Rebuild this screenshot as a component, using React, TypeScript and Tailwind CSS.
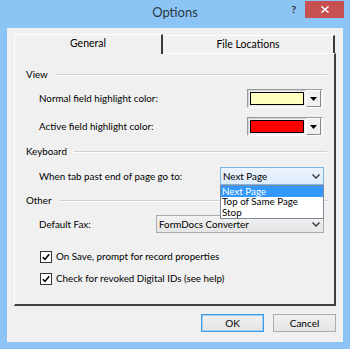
import React from "react"

function GroupHeader({ label, className }: { label: string; className: string }) {
  return (
    <div className={"h-[12px] flex items-center pl-[11px] pr-[7px] " + className}>
      <span className="leading-none">{label}</span>
      <div className="flex-1 ml-[7px] h-[2px] border-t border-t-[#d0d0d0] border-b border-b-white" />
    </div>
  )
}

function ColorPicker({ color }: { color: string }) {
  return (
    <div className="w-[76px] h-[19px] flex items-center border border-t-[#9a9a9a] border-l-[#9a9a9a] border-r-white border-b-white shadow-[inset_1px_1px_0_#d4d4d4] pl-[2px] pr-[1px] gap-[2px]">
      <div className="w-[55px] h-[13px] border border-black" style={{ backgroundColor: color }} />
      <div className="w-[15px] h-[17px] flex items-center justify-center bg-[#f0f0f0] border border-t-white border-l-white border-r-[#8a8a8a] border-b-[#8a8a8a]">
        <svg width="7" height="4" viewBox="0 0 7 4">
          <path d="M0 0h7L3.5 4z" fill="#000" />
        </svg>
      </div>
    </div>
  )
}

function Chevron() {
  return (
    <svg width="8" height="5" viewBox="0 0 8 5" className="mr-[3px]">
      <path d="M0.5 0.5L4 4L7.5 0.5" fill="none" stroke="#333" strokeWidth="1.3" />
    </svg>
  )
}

function CheckRow({ label, className }: { label: string; className: string }) {
  return (
    <div className={"h-[12px] flex items-center pl-[25px] " + className}>
      <div className="w-[12px] h-[12px] bg-white border border-[#333] flex items-center justify-center">
        <svg width="8" height="8" viewBox="0 0 8 8">
          <path d="M0.8 4.2L3 6.4L7.2 1.2" fill="none" stroke="#000" strokeWidth="1.6" />
        </svg>
      </div>
      <span className="ml-[4px] leading-none">{label}</span>
    </div>
  )
}

export default function App() {
  return (
    <div className="w-[350px] h-[349px] bg-[#8cc4f5] flex flex-col font-[Lato,sans-serif] text-[9.8px] text-black select-none overflow-hidden">
      {/* Title bar */}
      <div className="h-[28px] shrink-0 grid grid-cols-[1fr_auto_1fr]">
        <div />
        <div className="flex items-center pb-[3px] text-[13px] text-[#2b3846]">Options</div>
        <div className="flex items-start justify-end pr-[6px] pt-[1px]">
          <span className="mt-[3px] mr-[9px] text-[10px] font-bold text-[#222] leading-none">?</span>
          <div className="w-[39px] h-[17px] bg-[#c75050] flex items-center justify-center">
            <svg width="8" height="7" viewBox="0 0 8 7">
              <path d="M0.5 0.5L7.5 6.5M7.5 0.5L0.5 6.5" stroke="#fff" strokeWidth="1.5" />
            </svg>
          </div>
        </div>
      </div>

      {/* Client area */}
      <div className="mx-[7px] h-[314px] bg-[#f0f0f0] flex flex-col px-[7px] pt-[6px]">
        {/* Tabs */}
        <div className="h-[20px] flex items-end mb-[-1px]">
          <div className="relative z-10 w-[149px] h-[20px] bg-[#f0f0f0] border-t border-l border-white border-r-2 border-r-[#3a3a3a] flex items-center justify-center pb-[1px] text-[10.5px]">
            General
          </div>
          <div className="w-[172px] h-[18px] mb-[1px] bg-[#f0f0f0] border-t border-t-white border-r-2 border-r-[#3a3a3a] flex items-center justify-center text-[10.5px]">
            File Locations
          </div>
        </div>

        {/* Panel */}
        <div className="h-[253px] flex flex-col border-t border-l border-white border-r-2 border-b-2 border-r-[#404040] border-b-[#404040]">
          <GroupHeader label="View" className="mt-[15px]" />

          <div className="h-[19px] mt-[8px] flex items-center justify-between pl-[24px] pr-[11px]">
            <span>Normal field highlight color:</span>
            <ColorPicker color="#ffffc0" />
          </div>

          <div className="h-[19px] mt-[9px] flex items-center justify-between pl-[24px] pr-[11px]">
            <span>Active field highlight color:</span>
            <ColorPicker color="#ff0000" />
          </div>

          <GroupHeader label="Keyboard" className="mt-[10px]" />

          <div className="relative z-10 h-[18px] mt-[9px] flex items-center justify-between pl-[24px] pr-[10px]">
            <span>When tab past end of page go to:</span>
            <div className="relative w-[104px] h-[18px]">
              <div className="h-full flex items-center justify-between pl-[2px] border border-[#7eb4ea] bg-gradient-to-b from-[#ecf4fc] to-[#dcecfc]">
                <span>Next Page</span>
                <Chevron />
              </div>
              {/* open dropdown list */}
              <div className="absolute left-0 top-full w-full bg-white border border-[#7a8a99]">
                <div className="h-[10.5px] flex items-center pl-[1px] bg-[#3399ff] text-white">Next Page</div>
                <div className="h-[10.5px] flex items-center pl-[1px]">Top of Same Page</div>
                <div className="h-[10.5px] flex items-center pl-[1px]">Stop</div>
              </div>
            </div>
          </div>

          <GroupHeader label="Other" className="mt-[10px]" />

          <div className="h-[18px] mt-[8px] flex items-center justify-between pl-[24px] pr-[10px]">
            <span>Default Fax:</span>
            <div className="w-[168px] h-[18px] flex items-center justify-between pl-[2px] border border-[#acacac] bg-gradient-to-b from-[#f2f2f2] to-[#e5e5e5]">
              <span>FormDocs Converter</span>
              <Chevron />
            </div>
          </div>

          <CheckRow label="On Save, prompt for record properties" className="mt-[18px]" />
          <CheckRow label="Check for revoked Digital IDs (see help)" className="mt-[10px]" />
        </div>

        {/* Buttons */}
        <div className="mt-[8px] flex justify-end gap-[9px]">
          <button className="w-[63px] h-[18px] border border-[#3c9be6] bg-gradient-to-b from-[#f0f0f0] to-[#e5e5e5] shadow-[inset_0_0_0_1px_#9fd0f5] text-[10px]">
            OK
          </button>
          <button className="w-[63px] h-[18px] border border-[#acacac] bg-gradient-to-b from-[#f0f0f0] to-[#e5e5e5] text-[10px]">
            Cancel
          </button>
        </div>
      </div>
    </div>
  )
}
